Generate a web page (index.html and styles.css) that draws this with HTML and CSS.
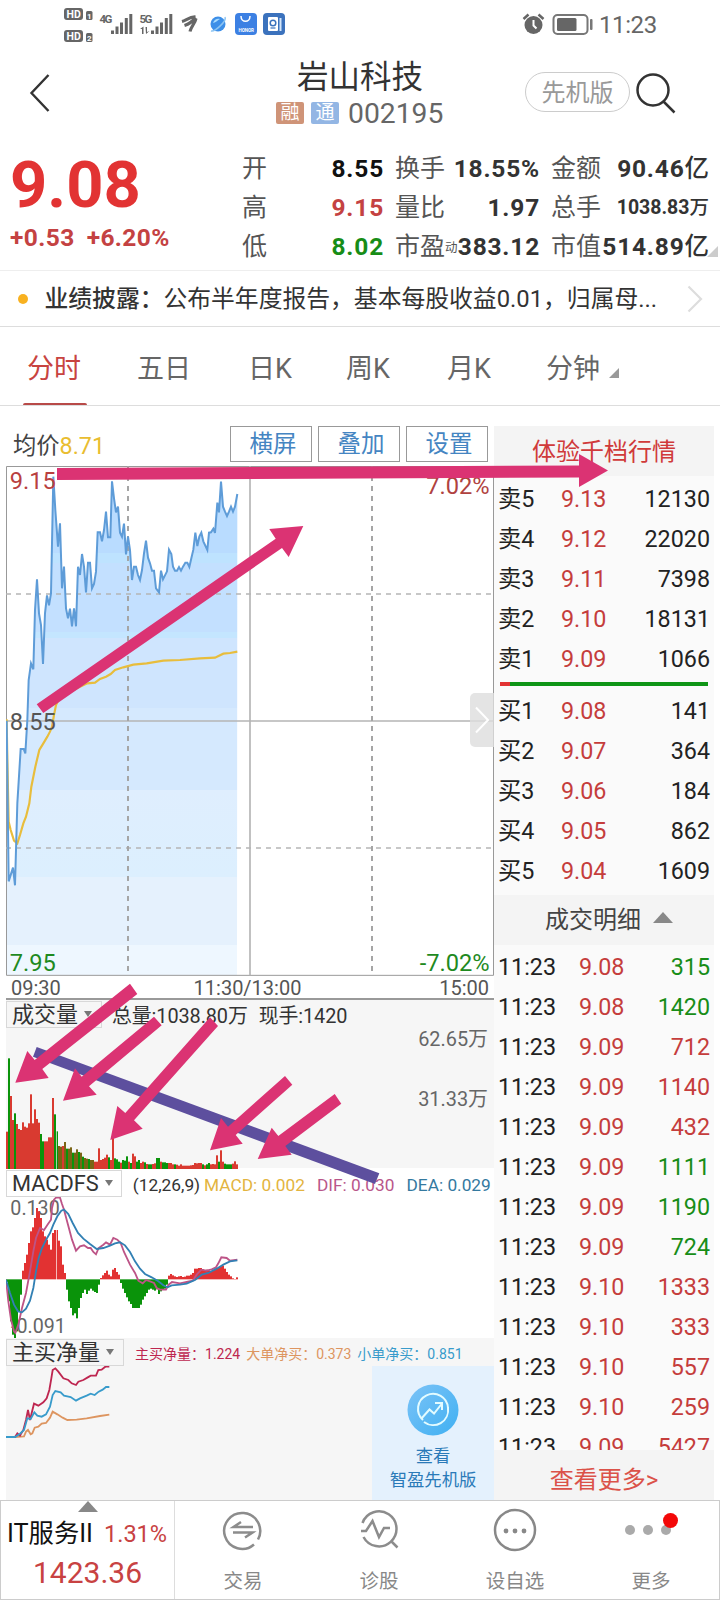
FILE: index.html
```html
<!DOCTYPE html>
<html lang="zh-CN">
<head>
    <meta charset="UTF-8">
    <meta name="viewport" content="width=device-width, initial-scale=1.0">
    <title>岩山科技 002195</title>
    <link rel="stylesheet" href="styles.css">
</head>
<body>
<div class="phone">
    <div class="statusbar">
        <svg class="status-left" width="228" height="36" viewBox="60 6 228 36">
            <g fill="#666">
                <rect x="64" y="8" width="19" height="12" rx="3"/>
                <rect x="64" y="30" width="19" height="12" rx="3"/>
                <rect x="86" y="11" width="6.500" height="9" rx="1.500"/>
                <rect x="86" y="33" width="6.500" height="9" rx="1.500"/>
                <text x="99.500" y="22.500" class="net">4G</text>
                <text x="139.500" y="22.500" class="net">5G</text>
                <rect x="111" y="30.500" width="3" height="3.500"/><rect x="115.500" y="26.500" width="3" height="7.500"/><rect x="120" y="22.500" width="3" height="11.500"/><rect x="124.800" y="18" width="3" height="16"/><rect x="129.300" y="14" width="3" height="20"/>
                <rect x="151" y="30.500" width="3" height="3.500"/><rect x="155.500" y="26.500" width="3" height="7.500"/><rect x="160" y="22.500" width="3" height="11.500"/><rect x="164.800" y="18" width="3" height="16"/><rect x="169.300" y="14" width="3" height="20"/>
                <path d="M140 29l3.500-2.500V34h-1.500v-5zM145.500 27h1.500v5l2.500-1-3.500 3z"/>
            </g>
            <g fill="none" stroke="#666" stroke-width="3.200">
                <path d="M182 21.500c4-1 8-5 13.500-4.500M184.500 25.500c5-1.500 8-4 11-8M190 31.500c1-5 5-8 6-13"/>
            </g>
            <g fill="#fff" class="hd">
                <text x="66.500" y="17.700">HD</text><text x="66.500" y="39.700">HD</text>
                <text x="87" y="18.700" class="sim">1</text><text x="87" y="40.700" class="sim">2</text>
            </g>
            <circle cx="218" cy="24" r="7.500" fill="#3d8fe8"/>
            <path d="M213 23c1-4 5-5 7-4-2 1-5 4-7 4z" fill="#a8dcff"/>
            <path d="M211 31c4 1 16-10 14-14" fill="none" stroke="#8cc4f2" stroke-width="1.500"/>
            <rect x="235" y="13" width="22" height="22" rx="4" fill="#3c80e3"/>
            <path d="M241 16c0 7 9 7 9 0" fill="none" stroke="#fff" stroke-width="1.500"/>
            <text x="238.500" y="32" class="honor">HONOR</text>
            <rect x="263" y="13" width="22" height="22" rx="4" fill="#3b72bd"/>
            <rect x="268" y="17" width="10" height="14" rx="1" fill="#fff"/>
            <path d="M280.500 18v13" stroke="#d4e6fa" stroke-width="2"/>
            <circle cx="273" cy="23" r="2.800" fill="none" stroke="#3b72bd" stroke-width="1.500"/>
            <path d="M270.500 28h5" stroke="#3b72bd" stroke-width="1.200"/>
        </svg>
        <svg class="status-right" width="74" height="24" viewBox="521 12 74 24">
            <circle cx="533.500" cy="25" r="9" fill="#666"/>
            <path d="M523.500 19l5-4.500M543.500 19l-5-4.500" stroke="#666" stroke-width="2.500"/>
            <path d="M533.500 20v5.500l3 3" fill="none" stroke="#fff" stroke-width="2"/>
            <rect x="553.500" y="15" width="34" height="19" rx="4" fill="none" stroke="#777" stroke-width="2"/>
            <rect x="557" y="18" width="19.500" height="13" rx="1.500" fill="#666"/>
            <rect x="590" y="19" width="2.500" height="11" rx="1" fill="#777"/>
        </svg>
        <span class="clock">11:23</span>
    </div>

    <header class="header">
        <svg class="back" width="24" height="42" viewBox="28 72 24 42"><path d="M48.500 75L31.500 93l17 18" fill="none" stroke="#333" stroke-width="2.400"/></svg>
        <div class="title">
            <h1>岩山科技</h1>
            <div class="code"><i class="tag rong">融</i><i class="tag tong">通</i><span>002195</span></div>
        </div>
        <span class="pill">先机版</span>
        <svg class="search" width="42" height="42" viewBox="635 72 42 42"><g fill="none" stroke="#333" stroke-width="2.500"><circle cx="653" cy="90" r="15.500"/><path d="M663.500 101.500l11 11"/></g></svg>
    </header>

    <section class="quote">
        <div class="now">
            <div class="price">9.08</div>
            <div class="change"><span>+0.53</span><span>+6.20%</span></div>
        </div>
        <div class="stats">
            <span>开</span><b class="black">8.55</b><span>换手</span><b>18.55%</b><span>金额</span><b>90.46<em>亿</em></b>
            <span>高</span><b class="red">9.15</b><span>量比</span><b>1.97</b><span>总手</span><b class="small">1038.83<em>万</em></b>
            <span>低</span><b class="green">8.02</b><span>市盈<small>动</small></span><b>383.12</b><span>市值</span><b>514.89<em>亿</em></b>
        </div>
        <i class="corner"></i>
    </section>

    <div class="news">
        <i class="dot"></i>
        <p><strong>业绩披露：</strong>公布半年度报告，基本每股收益0.01，归属母...</p>
        <svg width="16" height="28" viewBox="0 0 16 28"><path d="M1.500 1.500L14 14 1.500 26.500" fill="none" stroke="#ddd" stroke-width="2.200"/></svg>
    </div>

    <nav class="tabs">
        <a class="active">分时</a><a>五日</a><a>日K</a><a>周K</a><a>月K</a><a>分钟<i class="tri"></i></a>
    </nav>

    <main class="main">
        <div class="charts">
            <div class="toolbar">
                <span class="avg">均价<b>8.71</b></span>
                <button>横屏</button><button>叠加</button><button>设置</button>
            </div>
            <!-- minute chart, 3 units per pixel -->
            <div class="minute">
                <svg width="488" height="510" viewBox="18 18 1464 1530">
                    <defs>
                        <linearGradient id="fill" gradientUnits="userSpaceOnUse" x1="0" y1="18" x2="0" y2="1548">
                            <stop offset="0" stop-color="#b9dcff"/><stop offset=".17" stop-color="#b9dcff"/>
                            <stop offset=".17" stop-color="#bee3ff"/><stop offset=".19" stop-color="#bee3ff"/>
                            <stop offset=".19" stop-color="#c3e0ff"/><stop offset=".325" stop-color="#c3e0ff"/>
                            <stop offset=".325" stop-color="#c4e6ff"/><stop offset=".338" stop-color="#c4e6ff"/>
                            <stop offset=".338" stop-color="#cfe5fe"/><stop offset=".475" stop-color="#cfe5fe"/>
                            <stop offset=".475" stop-color="#d5e9fe"/><stop offset=".635" stop-color="#d5e9fe"/>
                            <stop offset=".635" stop-color="#dfeefe"/><stop offset=".805" stop-color="#dceffe"/>
                            <stop offset=".805" stop-color="#e5f1fd"/><stop offset=".94" stop-color="#e5f1fd"/>
                            <stop offset=".94" stop-color="#eef7ff"/><stop offset="1" stop-color="#eef7ff"/>
                        </linearGradient>
                    </defs>
                    <path id="area" fill="url(#fill)"/>
                    <g fill="none" stroke="#b5b5b5">
                        <path d="M19.500 1546V19.500H1480.500V1546z" stroke="#999" stroke-width="3"/>
                        <path d="M750 18V1546M18 783H1480" stroke-width="5"/>
                        <path d="M18 402H1480M18 1164H1480" stroke-width="5" stroke-dasharray="15 15"/>
                        <path d="M384 18V1546M1116 18V1546" stroke="#a5a5a5" stroke-width="6" stroke-dasharray="15 15"/>
                    </g>
                    <polyline id="avg-line" fill="none" stroke="#e8bd3c" stroke-width="6.500" points="20,778 22,900 26,1085 32,1110 42,1142 52,1150 60,1125 70,1090 78,1070 88,1030 94,980 106,920 118,870 130,850 142,830 150,815 156,800 162,765 168,735 178,715 200,700 240,680 262,670 285,668 300,657 318,650 332,642 345,630 370,622 400,614 440,610 490,602 540,600 600,595 645,593 670,581 690,579 712,575"/>
                    <polyline id="price-line" fill="none" stroke="#5e9cd8" stroke-width="6"/>
                    <g class="axis">
                        <text x="29" y="87" fill="#b9403f">9.15</text>
                        <text x="29" y="811" fill="#555">8.55</text>
                        <text x="29" y="1533" fill="#1f8a1f">7.95</text>
                        <text x="1469" y="102" fill="#b04240" text-anchor="end">7.02%</text>
                        <text x="1469" y="1533" fill="#1f8a1f" text-anchor="end">-7.02%</text>
                    </g>
                </svg>
                <span class="expand"><svg width="16" height="28" viewBox="0 0 16 28"><path d="M2 1.500L14 14 2 26.500" fill="none" stroke="#fff" stroke-width="2"/></svg></span>
            </div>
            <div class="times"><span>09:30</span><span>11:30/13:00</span><span>15:00</span></div>

            <section class="panel volume">
                <div class="panel-head">
                    <span class="select">成交量<i></i></span>
                    <span class="total">总量:1038.80万</span><span>现手:1420</span>
                </div>
                <div class="scale"><span>62.65万</span><span>31.33万</span></div>
                <svg class="vol-bars" width="232" height="112" viewBox="18 231 696 336"><g id="volume"></g></svg>
            </section>

            <section class="panel macd">
                <div class="panel-head">
                    <span class="select">MACDFS<i></i></span>
                    <span class="p">(12,26,9)</span><span class="m">MACD: 0.002</span><span class="dif">DIF: 0.030</span><span class="dea">DEA: 0.029</span>
                </div>
                <svg width="488" height="141" viewBox="18 97 1464 423">
                    <g class="axis small"><text x="31" y="150">0.130</text><text x="33" y="504">-0.091</text></g>
                    <g id="macd"></g>
                    <g fill="none" stroke-width="5.500">
                        <polyline stroke="#bd5487" points="18,345 25,410 33,465 42,500 46,505 55,480 66,430 78,385 90,320 100,260 108,220 120,190 132,196 144,178 153,165 156,130 162,105 168,99 180,99 186,118 192,135 204,180 216,225 228,258 240,245 252,242 264,250 272,250 280,262 288,269 296,250 310,240 318,233 330,240 340,220 352,225 362,235 372,262 390,300 405,325 415,348 428,356 438,346 450,350 462,355 470,370 480,375 498,375 506,360 516,352 540,356 560,352 578,348 590,330 604,315 620,318 635,314 648,308 655,296 664,278 680,280 690,288 712,285"/>
                        <polyline stroke="#3280b4" points="18,345 30,385 42,420 54,440 66,443 78,432 90,408 100,370 108,320 116,280 126,250 140,222 150,205 160,180 172,155 184,138 192,135 205,148 218,175 234,205 250,222 270,238 290,253 310,250 330,243 345,236 360,233 375,242 390,262 405,290 420,312 435,328 455,338 475,350 490,362 503,368 515,362 540,360 560,357 585,346 605,330 625,325 650,312 670,300 690,290 712,287"/>
                    </g>
                </svg>
            </section>

            <section class="panel net-buy">
                <div class="panel-head">
                    <span class="select">主买净量<i></i></span>
                    <span class="n1">主买净量：1.224</span><span class="n2">大单净买：0.373</span><span class="n3">小单净买：0.851</span>
                </div>
                <div class="net-body">
                    <svg width="366" height="134" viewBox="18 603 1098 402">
                        <g fill="none" stroke-width="5.500">
                            <polyline stroke="#dd9560" points="45,816 72,814 78,800 84,795 92,808 97,805 104,788 115,785 125,776 138,774 150,758 158,740 172,748 188,758 202,765 230,764 260,760 300,753 328,749"/>
                            <polyline stroke="#be2650" points="18,816 45,816 52,805 60,812 70,795 78,765 84,735 90,765 96,740 102,716 115,722 130,712 140,700 148,675 154,640 158,615 166,610 175,620 190,640 205,645 215,655 228,660 235,650 250,645 262,638 272,632 288,632 295,615 305,614 316,605 328,605"/>
                            <polyline stroke="#389bcb" points="18,816 45,816 60,806 72,795 82,760 92,762 103,742 112,752 125,755 138,748 150,725 158,690 166,678 182,682 192,692 212,696 228,707 240,700 260,692 272,686 284,690 296,680 308,674 318,666 328,666"/>
                        </g>
                    </svg>
                    <a class="promo">
                        <svg width="52" height="52" viewBox="0 0 52 52">
                            <defs><linearGradient id="pg" x1="0" y1="0" x2="1" y2="1"><stop offset="0" stop-color="#7cc3f7"/><stop offset="1" stop-color="#3fb0f2"/></linearGradient></defs>
                            <circle cx="26" cy="26" r="25.500" fill="url(#pg)"/>
                            <g fill="none" stroke="#e2fbff" stroke-width="2"><path d="M16 36a15 15 0 1 1 25-12 15 15 0 0 1-24 14M14 35l8.500-9.500 4.500 4L35 19.500"/><path d="M28 19h7v7"/></g>
                        </svg>
                        <span>查看</span><span>智盈先机版</span>
                    </a>
                </div>
            </section>
        </div>

        <aside class="side">
            <div class="depth">体验千档行情</div>
            <ul class="book">
                <li><span>卖5</span><b>9.13</b><em>12130</em></li>
                <li><span>卖4</span><b>9.12</b><em>22020</em></li>
                <li><span>卖3</span><b>9.11</b><em>7398</em></li>
                <li><span>卖2</span><b>9.10</b><em>18131</em></li>
                <li><span>卖1</span><b>9.09</b><em>1066</em></li>
            </ul>
            <div class="ratio"></div>
            <ul class="book">
                <li><span>买1</span><b>9.08</b><em>141</em></li>
                <li><span>买2</span><b>9.07</b><em>364</em></li>
                <li><span>买3</span><b>9.06</b><em>184</em></li>
                <li><span>买4</span><b>9.05</b><em>862</em></li>
                <li><span>买5</span><b>9.04</b><em>1609</em></li>
            </ul>
            <div class="detail-head">成交明细<i></i></div>
            <ul class="book trades">
                <li><span>11:23</span><b>9.08</b><em class="green">315</em></li>
                <li><span>11:23</span><b>9.08</b><em class="green">1420</em></li>
                <li><span>11:23</span><b>9.09</b><em class="red">712</em></li>
                <li><span>11:23</span><b>9.09</b><em class="red">1140</em></li>
                <li><span>11:23</span><b>9.09</b><em class="red">432</em></li>
                <li><span>11:23</span><b>9.09</b><em class="green">1111</em></li>
                <li><span>11:23</span><b>9.09</b><em class="green">1190</em></li>
                <li><span>11:23</span><b>9.09</b><em class="green">724</em></li>
                <li><span>11:23</span><b>9.10</b><em class="red">1333</em></li>
                <li><span>11:23</span><b>9.10</b><em class="red">333</em></li>
                <li><span>11:23</span><b>9.10</b><em class="red">557</em></li>
                <li><span>11:23</span><b>9.10</b><em class="red">259</em></li>
                <li><span>11:23</span><b>9.09</b><em class="red">5427</em></li>
            </ul>
            <a class="more">查看更多&gt;</a>
        </aside>
    </main>

    <footer class="bottom">
        <div class="index">
            <i class="up"></i>
            <div class="index-name">IT服务II<span>1.31%</span></div>
            <div class="index-value">1423.36</div>
        </div>
        <a class="item">
            <svg width="44" height="44" viewBox="-22 -22 44 44" fill="none" stroke="#8c8c8c" stroke-width="2.500"><path d="M11 14.500A18 18 0 1 1 15 9.500"/><path d="M10-3H-9.500L-2-8M-10 2.500H9.500L2 7.500"/></svg>
            <span>交易</span>
        </a>
        <a class="item">
            <svg width="44" height="44" viewBox="-22 -22 44 44" fill="none" stroke="#8c8c8c" stroke-width="2.500"><path d="M-16.500-7A17.500 17.500 0 1 1-15.500 7"/><path d="M12 11l6.500 6.500M-18 1h5L-6.500-9 0 7 5-2h6"/></svg>
            <span>诊股</span>
        </a>
        <a class="item">
            <svg width="44" height="44" viewBox="-22 -22 44 44"><circle r="20" fill="none" stroke="#888" stroke-width="2.500"/><g fill="#888"><circle cx="-9" cy="1" r="2.400"/><circle cy="1" r="2.400"/><circle cx="9" cy="1" r="2.400"/></g></svg>
            <span>设自选</span>
        </a>
        <a class="item">
            <svg width="56" height="44" viewBox="-28 -22 56 44"><g fill="#aaa"><circle cx="-21" r="5"/><circle cx="-3" r="5"/><circle cx="15" r="5"/></g><circle cx="19.500" cy="-9.500" r="7.500" fill="#f30808"/></svg>
            <span>更多</span>
        </a>
    </footer>

    <!-- hand drawn trend marks over the charts -->
    <svg class="marks" width="720" height="1600" viewBox="0 0 720 1600">
        <polygon fill="#5d4f9e" points="36.700,1047 379.300,1173.300 375,1184 33,1056.700"/>
        <g fill="#db3373">
            <polygon points="57,468 579,465.500 579,454 608,470.500 579,487 579,477.500 57,480"/>
            <polygon points="36.700,704.300 275.700,538.700 269.300,529 303.300,526 288.700,557 282,548 43.300,713"/>
            <polygon points="130,983.700 34.700,1060 27.300,1051 15.300,1082.700 48.700,1078 42.300,1069 137.300,994"/>
            <polygon points="154,1016.700 81.700,1076.700 75,1068.300 63,1100.700 96.700,1094.700 89,1086.300 161.700,1025.300"/>
            <polygon points="210,1017.300 125.300,1113 117.300,1106 110.300,1140 142.700,1128.700 134,1120.300 218,1026"/>
            <polygon points="285,1076 228,1126.700 221,1118 210,1150.300 242.700,1143.700 235.700,1135 292.300,1084.700"/>
            <polygon points="334.700,1094 278.300,1136 271.700,1127.700 257.700,1159 291.700,1154.700 285.300,1146 341.300,1103.700"/>
        </g>
    </svg>
</div>
<script src="script.js"></script>
</body>
</html>
```
FILE: styles.css
```css
* {
    box-sizing: border-box;
}
body {
    margin: 0;
    background: #fff;
    color: #333;
    font-family: Roboto, "Noto Sans CJK SC", sans-serif;
}
h1, p, ul {
    margin: 0;
    padding: 0;
    font-weight: 400;
}
i, em {
    font-style: normal;
}
svg {
    display: block;
    flex: none;
}
.phone {
    position: relative;
    width: 720px;
    height: 1600px;
    overflow: hidden;
}
.red { color: #c53d3c; }
.green { color: #178d17; }

/* status bar */
.statusbar {
    display: flex;
    height: 50px;
    padding: 6px 0 0 60px;
    align-items: flex-start;
}
.status-right {
    margin: 6px 4px 0 233px;
}
.clock {
    font-size: 24px;
    line-height: 38px;
    letter-spacing: -0.4px;
    color: #666;
}
.net {
    font: bold 11.5px Roboto;
    letter-spacing: -1.5px;
}
.hd {
    font: bold 10.5px Roboto;
}
.sim {
    font-size: 8px;
}
.honor {
    font: bold 4.5px Roboto;
    fill: #fff;
}

/* header */
.header {
    display: flex;
    height: 85px;
    padding-left: 28px;
}
.back {
    margin-top: 22px;
}
.title {
    width: 320px;
    margin-left: 148px;
    text-align: center;
}
.title h1 {
    padding-top: 3px;
    height: 50px;
    font-size: 31.5px;
    line-height: 50px;
    color: #333;
}
.code {
    display: flex;
    align-items: center;
    margin-left: 76px;
    height: 26px;
}
.code span {
    font-size: 28.3px;
    color: #666;
    margin-left: 2px;
}
.tag {
    width: 28px;
    height: 22px;
    margin-right: 7px;
    border-radius: 2px;
    font-size: 19px;
    line-height: 21px;
    color: #fff;
}
.rong { background: #cf9478; }
.tong { background: #93b6e4; }
.pill {
    width: 105px;
    height: 40px;
    margin: 22px 5px 0 5px;
    border: 1px solid #ccc;
    border-radius: 20px;
    text-align: center;
    font-size: 24px;
    line-height: 40px;
    color: #999;
}
.search {
    margin-top: 22px;
}

/* quote */
.quote {
    position: relative;
    display: flex;
    height: 136px;
    border-bottom: 1px solid #eee;
}
.now {
    width: 242px;
    padding-left: 10px;
}
.price {
    font-size: 65px;
    font-weight: 700;
    line-height: 76px;
    margin-top: 12px;
    color: #e23333;
}
.change {
    display: flex;
    gap: 12px;
    font-size: 24.5px;
    font-weight: 700;
    line-height: 29px;
    letter-spacing: 0.4px;
    color: #c44242;
}
.stats {
    display: grid;
    grid-template-columns: 60px 82px 61px 95px 58px 111px;
    grid-template-rows: repeat(3, 39px);
    margin-top: 14px;
    line-height: 39px;
    font-size: 25px;
    white-space: nowrap;
}
.stats span {
    color: #555;
}
.stats span:nth-child(6n+3) {
    padding-left: 11px;
}
.stats span:nth-child(6n+5) {
    padding-left: 11px;
}
.stats b {
    text-align: right;
    font-weight: 700;
    font-size: 24.5px;
    letter-spacing: 0.8px;
}
.stats b em {
    font-weight: 500;
    letter-spacing: 0;
}
.stats .small {
    font-size: 19.5px;
    letter-spacing: 0;
}
.stats small {
    font-size: 12.5px;
    vertical-align: 3px;
}
.stats .black { color: #111; }
.stats .red { color: #c44242; }
.corner {
    position: absolute;
    right: 2px;
    bottom: 13px;
    border-left: 11px solid transparent;
    border-bottom: 11px solid #ccc;
}

/* news */
.news {
    display: flex;
    align-items: center;
    height: 56px;
    padding: 0 0 0 18px;
    border-bottom: 1px solid #ddd;
}
.dot {
    width: 10px;
    height: 10px;
    border-radius: 50%;
    background: #f8b120;
}
.news p {
    width: 659px;
    padding-left: 16.5px;
    font-size: 23.8px;
    line-height: 54px;
    white-space: nowrap;
}
.news strong {
    font-weight: 500;
}

/* tabs */
.tabs {
    display: grid;
    grid-template-columns: 110px 111px 98px 101px 99px auto;
    grid-template-rows: 78px;
    height: 79px;
    padding-left: 27px;
    border-bottom: 1px solid #ddd;
    font-size: 27px;
    line-height: 85px;
    color: #666;
}
.tabs .active {
    position: relative;
    color: #c84340;
}
.tabs .active::after {
    content: "";
    position: absolute;
    left: -4px;
    bottom: 0;
    width: 64px;
    height: 2px;
    border-radius: 2px 2px 0 0;
    background: #b84a48;
}
.tri {
    display: inline-block;
    margin-left: 9px;
    border-left: 10px solid transparent;
    border-bottom: 10px solid #999;
}

/* charts */
.main {
    display: flex;
    height: 1094px;
    padding: 20px 6px 0;
}
.charts {
    width: 488px;
}
.toolbar {
    display: flex;
    gap: 6px;
    height: 40px;
    padding-left: 7px;
}
.avg {
    width: 211px;
    font-size: 23.3px;
    line-height: 41px;
    color: #444;
}
.avg b {
    font-weight: 400;
    color: #e9bd30;
}
.toolbar button {
    width: 82px;
    height: 36px;
    padding: 0 0 0 4px;
    border: 1px solid #999;
    background: #fff;
    font: 23.5px/35px Roboto, "Noto Sans CJK SC", sans-serif;
    color: #4585c2;
}
.minute {
    position: relative;
}
.axis {
    font: 71px Roboto;
}
.axis.small {
    font-size: 59px;
    fill: #666;
}
.expand {
    position: absolute;
    right: 0;
    top: 227px;
    width: 24px;
    height: 54px;
    padding: 13px 0 0 4px;
    border-radius: 5px 0 0 5px;
    background: rgba(221, 221, 221, 0.8);
}
.times {
    display: flex;
    justify-content: space-between;
    height: 24px;
    padding: 0 5px 0 5px;
    border-bottom: 2px solid #999;
    font-size: 20px;
    line-height: 24px;
    color: #555;
}
.times span:nth-child(2) {
    margin-right: 5px;
}
.panel-head {
    display: flex;
    align-items: center;
    height: 28px;
    white-space: nowrap;
}
.select {
    display: flex;
    align-items: center;
    height: 27px;
    padding: 0 9px 0 5px;
    border: 1px solid #d8d8d8;
    font-size: 22px;
    line-height: 25px;
}
.select i {
    margin-left: 6px;
    border: 4px solid transparent;
    border-top: 6px solid #777;
    border-bottom: 0;
}
.volume {
    height: 168px;
    background: #f6f6f6;
    font-size: 19.9px;
}
.volume .total {
    margin: 0 11px 0 10px;
    letter-spacing: -0.1px;
}
.volume .total + span {
    letter-spacing: -0.1px;
}
.volume .scale {
    display: flex;
    flex-direction: column;
    align-items: flex-end;
    gap: 36px;
    height: 29px;
    padding-right: 6px;
    line-height: 24px;
    color: #666;
}
.macd {
    height: 170px;
    padding-top: 1px;
    font-size: 17.3px;
}
.macd .panel-head > span + span {
    padding-top: 3px;
}
.macd .select {
    font-size: 21.8px;
    padding-right: 8px;
}
.macd .p { margin: 0 4px 0 11px; }
.macd .m { color: #e3b440; }
.macd .dif { margin: 0 12px; color: #b9568a; }
.macd .dea { color: #34799f; }
.net-buy {
    height: 162px;
    background: #f6f6f6;
    font-size: 14px;
}
.net-buy .panel-head > span + span {
    padding-top: 2px;
}
.net-buy .n1 { margin-left: 11px; color: #be2650; }
.net-buy .n2 { margin: 0 6px; color: #dd9560; }
.net-buy .n3 { color: #389bcb; }
.net-body {
    display: flex;
}
.promo {
    width: 122px;
    height: 134px;
    padding-top: 18px;
    background: #e4f1fd;
    font-size: 17.3px;
    line-height: 24px;
    text-align: center;
    color: #2a7ab8;
}
.promo svg {
    margin: 0 auto 8px 35px;
}
.promo span {
    display: block;
}

/* order book */
.side {
    width: 220px;
    background: #fafafa;
}
.depth {
    height: 50px;
    background: #f4f4f4;
    text-align: center;
    font-size: 24px;
    line-height: 52px;
    color: #d03a3a;
}
.book {
    list-style: none;
    padding-top: 3px;
}
.book li {
    display: grid;
    grid-template-columns: 63px 60px 1fr;
    height: 40px;
    padding: 0 4px 0 4px;
    font-size: 23.3px;
    line-height: 40px;
    color: #222;
}
.book b {
    font-weight: 400;
    color: #c53d3c;
}
.book em {
    text-align: right;
}
.ratio {
    width: 208px;
    height: 4px;
    margin: 3px 0 2px 6px;
    background: linear-gradient(90deg, #e23333 10px, #0f9516 10px);
}
.detail-head {
    display: flex;
    align-items: center;
    justify-content: center;
    gap: 12px;
    height: 50px;
    margin-top: 4px;
    padding: 0 0 6px 10px;
    background: #f4f4f4;
    font-size: 24px;
    color: #444;
}
.detail-head i {
    border: 10px solid transparent;
    border-bottom: 11px solid #888;
    border-top: 0;
}
.trades {
    height: 505px;
    padding-top: 2px;
    overflow: hidden;
}
.trades li {
    grid-template-columns: 81px 60px 1fr;
}
.more {
    display: block;
    height: 50px;
    background: #f4f4f4;
    text-align: center;
    font-size: 24px;
    line-height: 60px;
    color: #db5249;
}

/* bottom bar */
.bottom {
    display: flex;
    height: 100px;
    border: 1px solid #ccc;
}
.index {
    width: 174px;
    border-right: 1px solid #ddd;
}
.up {
    display: block;
    width: 0;
    margin-left: 77px;
    border: 10px solid transparent;
    border-bottom: 11px solid #888;
    border-top: 0;
}
.index-name {
    padding-left: 6px;
    font-size: 25.3px;
    line-height: 44px;
    color: #111;
    white-space: nowrap;
}
.index-name span {
    margin-left: 11px;
    font-size: 23.5px;
    color: #c84242;
}
.index-value {
    text-align: center;
    font-size: 30px;
    line-height: 33px;
    color: #c84242;
}
.item {
    display: flex;
    flex: 1;
    flex-direction: column;
    align-items: center;
    padding-top: 7px;
    font-size: 19.5px;
    color: #888;
}
.item span {
    margin-top: 13px;
}
.marks {
    position: absolute;
    left: 0;
    top: 0;
    pointer-events: none;
}
```
FILE: script.js
```js
var RED = '#e23232', GREEN = '#0a930a';

// minute prices as x,y pairs
var price = '20,782 26,1264 39,1223 45,1276 52,1030 62,867 71,867 76,880 82,780 86,660 93,610 100,628 105,450 111,358 117,460 123,495 129,612 135,460 141,406 147,436 153,400 160,50 166,150 174,260 180,190 186,385 192,320 198,445 204,475 210,446 216,499 222,445 228,499 234,320 240,345 246,282 252,320 258,397 264,308 270,308 276,385 282,372 288,335 293,217 300,217 306,244 312,210 318,155 324,232 331,232 336,64 342,115 348,157 354,140 360,218 366,230 372,191 378,283 384,230 390,270 396,360 402,320 408,320 414,345 420,360 426,330 432,280 438,242 444,293 450,310 456,332 462,332 468,385 477,397 483,332 489,358 501,334 507,269 514,282 519,320 525,332 531,332 537,321 543,332 549,320 556,308 562,308 568,321 574,295 580,269 586,218 592,258 598,230 604,218 610,244 622,270 627,218 633,217 640,206 645,219 652,128 657,157 663,65 669,140 675,155 681,168 687,155 693,140 699,155 705,140 712,102';
document.getElementById('price-line').setAttribute('points', price);
document.getElementById('area').setAttribute('d', 'M20,1546 L' + price + ' L711,1546 Z');

function bar(x, y, h, color, w) {
    return '<rect x="' + x + '" y="' + y + '" width="' + (w || 6) + '" height="' + h + '" fill="' + color + '"/>';
}

// volume: top of each bar and its colour (r, g, or o for mixed)
var tops = [455,235,348,420,400,432,447,450,427,440,443,430,343,430,388,417,428,462,484,484,484,472,472,354,403,454,498,500,498,486,506,506,502,518,518,508,516,518,530,534,536,537,540,540,545,545,505,540,537,533,524,532,540,470,535,538,545,548,540,542,529,545,549,521,529,545,540,549,545,547,552,553,553,552,550,534,534,545,547,547,549,549,549,553,553,554,557,553,557,557,557,557,556,555,549,550,549,549,553,556,553,549,553,552,553,526,545,511,545,551,553,553,553,551,544,553];
var kinds = 'rgrrgrrrrrrrrrrrrggrrrrrggoorogoogoogogoogoorrrrrrrgrrgggrgggrgrrggrrgrggrrggrgggrrrgrrrrrrrrrrrrrgrggrrrrgrrggggrr';
var html = '';
tops.forEach(function (t, i) {
    var c = { r: '#d93a30', g: '#0a930a', o: '#7a6416' }[kinds[i] || 'r'];
    html += bar(18 + i * 6, t, 567 - t, c);
});
document.getElementById('volume').innerHTML = html + bar(169, 400, 167, '#f6f6f6', 2);

// MACD histogram around the zero line
var hist = [352,410,470,510,522,500,440,390,318,295,270,235,200,188,160,130,140,160,200,215,225,240,255,205,196,196,228,245,300,325,375,410,430,452,446,461,430,400,385,375,388,378,372,378,382,385,360,340,332,325,318,330,335,315,310,322,330,355,372,385,398,410,418,430,430,430,430,420,405,395,385,375,372,375,378,374,388,380,375,372,360,333,328,332,335,337,335,334,337,336,333,333,330,325,312,312,310,310,314,316,315,317,320,318,314,312,308,305,303,312,322,330,335,341,345,338];
html = '';
hist.forEach(function (v, i) {
    html += bar(18 + i * 6, Math.min(v, 344), Math.abs(v - 344), v > 345 ? GREEN : RED);
});
document.getElementById('macd').innerHTML = html + bar(169, 190, 158, '#fff', 2);
```
